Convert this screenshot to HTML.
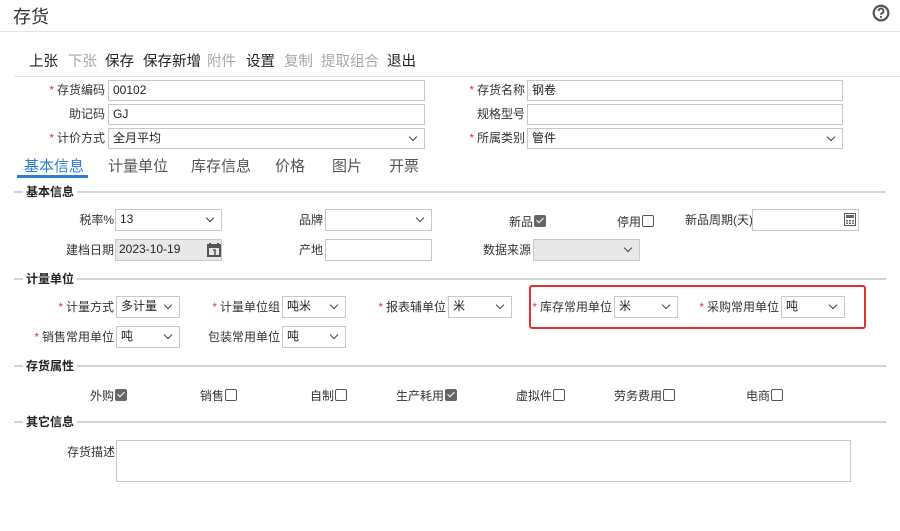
<!DOCTYPE html><html><head><meta charset="utf-8"><style>
body{margin:0;width:900px;height:531px;background:#fff;position:relative;overflow:hidden;font-family:"Liberation Sans","Noto Sans CJK SC",sans-serif;color:#333;font-size:12px}
.a{position:absolute;white-space:nowrap}
.l{position:absolute;text-align:right;white-space:nowrap;line-height:20px}
.s{color:#e4393c;margin-right:3px}
.i{position:absolute;border:1px solid #c8c8c8;box-sizing:border-box;background:#fff;font-size:12px;line-height:19px;padding-left:4px;color:#222}
.i.d::after{content:"";position:absolute;right:8px;top:5px;width:5px;height:5px;border-right:1.5px solid #444;border-bottom:1.5px solid #444;transform:rotate(45deg)}
.g{background:#e8e8e8}
.sec{position:absolute;left:14px;right:14px;height:12px}
.sec span{position:absolute;left:9px;top:-8px;background:#fff;padding:0 3px;font-weight:bold;color:#222;font-size:12px}
.sec::before{content:"";position:absolute;left:0;right:0;top:0;border-top:2px solid #d4d4d4}
.cb{display:inline-block;width:10px;height:10px;border:1px solid #555;border-radius:2px;vertical-align:-1px;margin-left:1px;background:#fff;position:relative}
.cb.c{background:#666;border-color:#666}
.cb.c::after{content:"";position:absolute;left:3px;top:0px;width:3px;height:6px;border-right:1.5px solid #fff;border-bottom:1.5px solid #fff;transform:rotate(45deg)}
.tb{position:absolute;top:50px;font-size:14.5px;color:#222}
.tb.x{color:#aaa}
.tab{position:absolute;top:155px;font-size:15px;color:#555}
</style></head><body>
<div class="a" style="left:13px;top:3px;font-size:18px;color:#333">存货</div>
<svg class="a" style="left:872px;top:4px" width="18" height="18" viewBox="0 0 16 16"><circle cx="8" cy="8" r="6.5" fill="none" stroke="#555" stroke-width="2"/><path d="M5.8 6.3a2.2 2.2 0 1 1 3 2c-.6.3-.8.6-.8 1.3" fill="none" stroke="#555" stroke-width="1.8"/><circle cx="8" cy="11.6" r="1" fill="#555"/></svg>
<div class="a" style="left:0;right:0;top:31px;border-top:1px solid #e4e4e4"></div>
<div class="tb" style="left:29px">上张</div><div class="tb x" style="left:68px">下张</div><div class="tb" style="left:105px">保存</div><div class="tb" style="left:143px">保存新增</div><div class="tb x" style="left:207px">附件</div><div class="tb" style="left:246px">设置</div><div class="tb x" style="left:284px">复制</div><div class="tb x" style="left:321px">提取组合</div><div class="tb" style="left:387px">退出</div>
<div class="a" style="left:14px;right:0;top:76px;border-top:1px solid #e4e4e4"></div>

<div class="l" style="right:795px;top:80px"><span class="s">*</span>存货编码</div><div class="i" style="left:108px;top:80px;width:317px;height:21px">00102</div>
<div class="l" style="right:795px;top:104px">助记码</div><div class="i" style="left:108px;top:104px;width:317px;height:21px">GJ</div>
<div class="l" style="right:795px;top:128px"><span class="s">*</span>计价方式</div><div class="i d" style="left:108px;top:128px;width:317px;height:21px">全月平均</div>
<div class="l" style="right:375px;top:80px"><span class="s">*</span>存货名称</div><div class="i" style="left:527px;top:80px;width:316px;height:21px">钢卷</div>
<div class="l" style="right:375px;top:104px">规格型号</div><div class="i" style="left:527px;top:104px;width:316px;height:21px"></div>
<div class="l" style="right:375px;top:128px"><span class="s">*</span>所属类别</div><div class="i d" style="left:527px;top:128px;width:316px;height:21px">管件</div>

<div class="tab" style="left:24px;color:#2a7fd4">基本信息</div>
<div class="a" style="left:17px;top:175px;width:71px;height:3px;background:#2a7fd4"></div>
<div class="tab" style="left:108px">计量单位</div><div class="tab" style="left:191px">库存信息</div><div class="tab" style="left:275px">价格</div><div class="tab" style="left:332px">图片</div><div class="tab" style="left:389px">开票</div>

<div class="sec" style="top:191px"><span>基本信息</span></div>
<div class="l" style="right:786px;top:210px">税率%</div><div class="i d" style="left:115px;top:209px;width:107px;height:22px">13</div>
<div class="l" style="right:577px;top:210px">品牌</div><div class="i d" style="left:325px;top:209px;width:107px;height:22px"></div>
<div class="a" style="left:509px;top:213px">新品<span class="cb c"></span></div>
<div class="a" style="left:617px;top:213px">停用<span class="cb"></span></div>
<div class="a" style="left:685px;top:211px">新品周期(天)</div><div class="i" style="left:752px;top:209px;width:107px;height:22px"></div>
<svg class="a" style="left:844px;top:213px" width="12" height="13" viewBox="0 0 12 13"><rect x="0.5" y="0.5" width="11" height="12" fill="#fff" stroke="#555"/><rect x="2" y="2" width="8" height="3" fill="#666"/><path d="M2 7h2v1.5H2zM5 7h2v1.5H5zM8 7h2v1.5H8zM2 9.5h2V11H2zM5 9.5h2V11H5zM8 9.5h2V11H8z" fill="#666"/></svg>
<div class="l" style="right:786px;top:240px">建档日期</div><div class="i g" style="left:115px;top:239px;width:107px;height:22px;padding-left:3px">2023-10-19</div>
<svg class="a" style="left:207px;top:243px" width="14" height="14" viewBox="0 0 14 14"><rect x="1" y="2" width="12" height="11" fill="none" stroke="#555" stroke-width="2"/><rect x="1" y="2" width="12" height="3" fill="#555"/><path d="M3 0v3M11 0v3" stroke="#555" stroke-width="2"/><path d="M6 7h2v5" stroke="#555" stroke-width="1.5" fill="none"/></svg>
<div class="l" style="right:577px;top:240px">产地</div><div class="i" style="left:325px;top:239px;width:107px;height:22px"></div>
<div class="l" style="right:369px;top:240px">数据来源</div><div class="i d g" style="left:533px;top:239px;width:107px;height:22px"></div>

<div class="sec" style="top:278px"><span>计量单位</span></div>
<div class="l" style="right:786px;top:297px"><span class="s">*</span>计量方式</div><div class="i d" style="left:116px;top:296px;width:64px;height:22px">多计量</div>
<div class="l" style="right:620px;top:297px"><span class="s">*</span>计量单位组</div><div class="i d" style="left:282px;top:296px;width:64px;height:22px">吨米</div>
<div class="l" style="right:454px;top:297px"><span class="s">*</span>报表辅单位</div><div class="i d" style="left:448px;top:296px;width:64px;height:22px">米</div>
<div class="l" style="right:288px;top:297px"><span class="s">*</span>库存常用单位</div><div class="i d" style="left:614px;top:296px;width:64px;height:22px">米</div>
<div class="l" style="right:121px;top:297px"><span class="s">*</span>采购常用单位</div><div class="i d" style="left:781px;top:296px;width:64px;height:22px">吨</div>
<div class="a" style="left:529px;top:285px;width:337px;height:44px;border:2px solid #e53030;border-radius:3px;box-sizing:border-box"></div>
<div class="l" style="right:786px;top:327px"><span class="s">*</span>销售常用单位</div><div class="i d" style="left:116px;top:326px;width:64px;height:22px">吨</div>
<div class="l" style="right:620px;top:327px">包装常用单位</div><div class="i d" style="left:282px;top:326px;width:64px;height:22px">吨</div>

<div class="sec" style="top:365px"><span>存货属性</span></div>
<div class="a" style="left:90px;top:387px">外购<span class="cb c"></span></div>
<div class="a" style="left:200px;top:387px">销售<span class="cb"></span></div>
<div class="a" style="left:310px;top:387px">自制<span class="cb"></span></div>
<div class="a" style="left:396px;top:387px">生产耗用<span class="cb c"></span></div>
<div class="a" style="left:516px;top:387px">虚拟件<span class="cb"></span></div>
<div class="a" style="left:614px;top:387px">劳务费用<span class="cb"></span></div>
<div class="a" style="left:746px;top:387px">电商<span class="cb"></span></div>

<div class="sec" style="top:421px"><span>其它信息</span></div>
<div class="a" style="left:67px;top:443px">存货描述</div><div class="i" style="left:116px;top:440px;width:735px;height:42px"></div>
</body></html>
